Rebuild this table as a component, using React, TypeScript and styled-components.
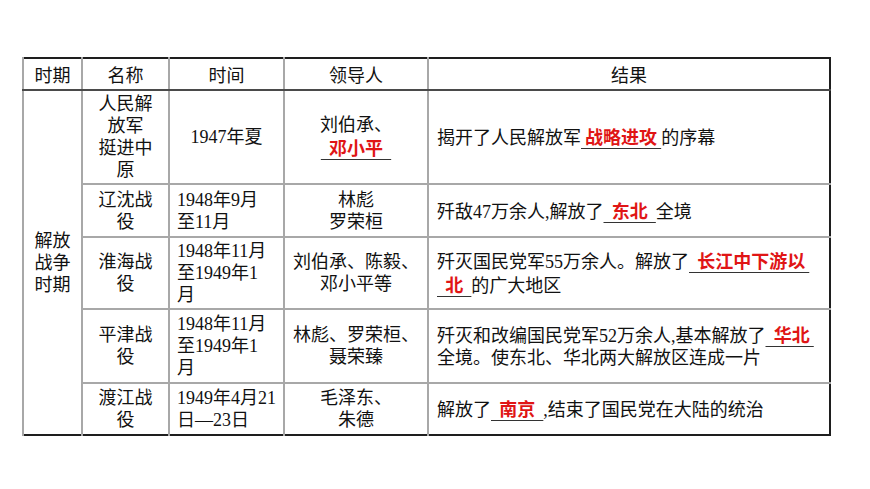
import React from 'react';
import styled, { createGlobalStyle } from 'styled-components';

const GlobalStyle = createGlobalStyle`
  html, body {
    margin: 0;
    padding: 0;
    background: #ffffff;
  }
`;

const Page = styled.div`
  width: 870px;
  height: 489px;
  box-sizing: border-box;
  padding: 57px 0 0 22px;
  background: #fff;
`;

const Table = styled.table`
  width: 807px;
  table-layout: fixed;
  border-collapse: collapse;
  border: 2px solid #1e1e1e;
  font-family: "Liberation Serif", "Noto Sans CJK SC", serif;
  font-size: 18px;
  line-height: 22px;
  color: #111;
`;

const Row = styled.tr<{ $h: number }>`
  height: ${p => p.$h}px;
`;

const HeadCell = styled.th`
  font-weight: normal;
  text-align: center;
  vertical-align: middle;
  padding: 0;
  border-left: 2px solid #a8a8a8;
  border-bottom: 2px solid #4a4a4a;
  font-family: "Noto Sans CJK SC", sans-serif;
`;

const Cell = styled.td<{ $align?: 'left' | 'center' }>`
  text-align: ${p => p.$align || 'center'};
  vertical-align: middle;
  padding: ${p => (p.$align === 'left' ? '0 4px 0 7px' : '0 4px')};
  border-left: 2px solid #a8a8a8;
  border-top: 2px solid #a8a8a8;
  white-space: nowrap;
`;

const ResultCell = styled(Cell)`
  padding: 0 6px 0 8px;
`;

const Num = styled.span`
  font-family: "Liberation Serif", serif;
`;

const Blank = styled.span`
  color: #e01515;
  font-weight: bold;
  font-family: "Noto Sans CJK SC", sans-serif;
  text-decoration: underline;
  text-decoration-color: #333;
  text-decoration-thickness: 1px;
  text-underline-offset: 4px;
  white-space: pre;
`;

const cols = [59, 87, 115, 144, 402];

export default function App() {
  return (
    <>
      <GlobalStyle />
      <Page>
        <Table>
          <colgroup>
            {cols.map((w, i) => (
              <col key={i} style={{ width: w }} />
            ))}
          </colgroup>
          <thead>
            <Row $h={32}>
              <HeadCell>时期</HeadCell>
              <HeadCell>名称</HeadCell>
              <HeadCell>时间</HeadCell>
              <HeadCell>领导人</HeadCell>
              <HeadCell>结果</HeadCell>
            </Row>
          </thead>
          <tbody>
            <Row $h={94}>
              <Cell rowSpan={5}>
                解放<br />战争<br />时期
              </Cell>
              <Cell>
                人民解<br />放军<br />挺进中<br />原
              </Cell>
              <Cell>1947年夏</Cell>
              <Cell>
                刘伯承、<br />
                <Blank>{'  邓小平  '}</Blank>
              </Cell>
              <ResultCell $align="left">
                揭开了人民解放军<Blank>{' 战略进攻 '}</Blank>的序幕
              </ResultCell>
            </Row>
            <Row $h={53}>
              <Cell>
                辽沈战<br />役
              </Cell>
              <Cell $align="left">
                1948年9月<br />至11月
              </Cell>
              <Cell>
                林彪<br />罗荣桓
              </Cell>
              <ResultCell $align="left">
                歼敌<Num>47</Num>万余人,解放了<Blank>{'  东北  '}</Blank>全境
              </ResultCell>
            </Row>
            <Row $h={72}>
              <Cell>
                淮海战<br />役
              </Cell>
              <Cell $align="left">
                1948年11月<br />至1949年1<br />月
              </Cell>
              <Cell>
                刘伯承、陈毅、<br />邓小平等
              </Cell>
              <ResultCell $align="left">
                歼灭国民党军<Num>55</Num>万余人。解放了<Blank>{'  长江中下游以 '}</Blank>
                <br />
                <Blank>{'  北  '}</Blank>的广大地区
              </ResultCell>
            </Row>
            <Row $h={74}>
              <Cell>
                平津战<br />役
              </Cell>
              <Cell $align="left">
                1948年11月<br />至1949年1<br />月
              </Cell>
              <Cell>
                林彪、罗荣桓、<br />聂荣臻
              </Cell>
              <ResultCell $align="left">
                歼灭和改编国民党军<Num>52</Num>万余人,基本解放了<Blank>{'  华北 '}</Blank>
                <br />
                全境。使东北、华北两大解放区连成一片
              </ResultCell>
            </Row>
            <Row $h={52}>
              <Cell>
                渡江战<br />役
              </Cell>
              <Cell $align="left">
                1949年4月21<br />日—23日
              </Cell>
              <Cell>
                毛泽东、<br />朱德
              </Cell>
              <ResultCell $align="left">
                解放了<Blank>{'  南京  '}</Blank>,结束了国民党在大陆的统治
              </ResultCell>
            </Row>
          </tbody>
        </Table>
      </Page>
    </>
  );
}
